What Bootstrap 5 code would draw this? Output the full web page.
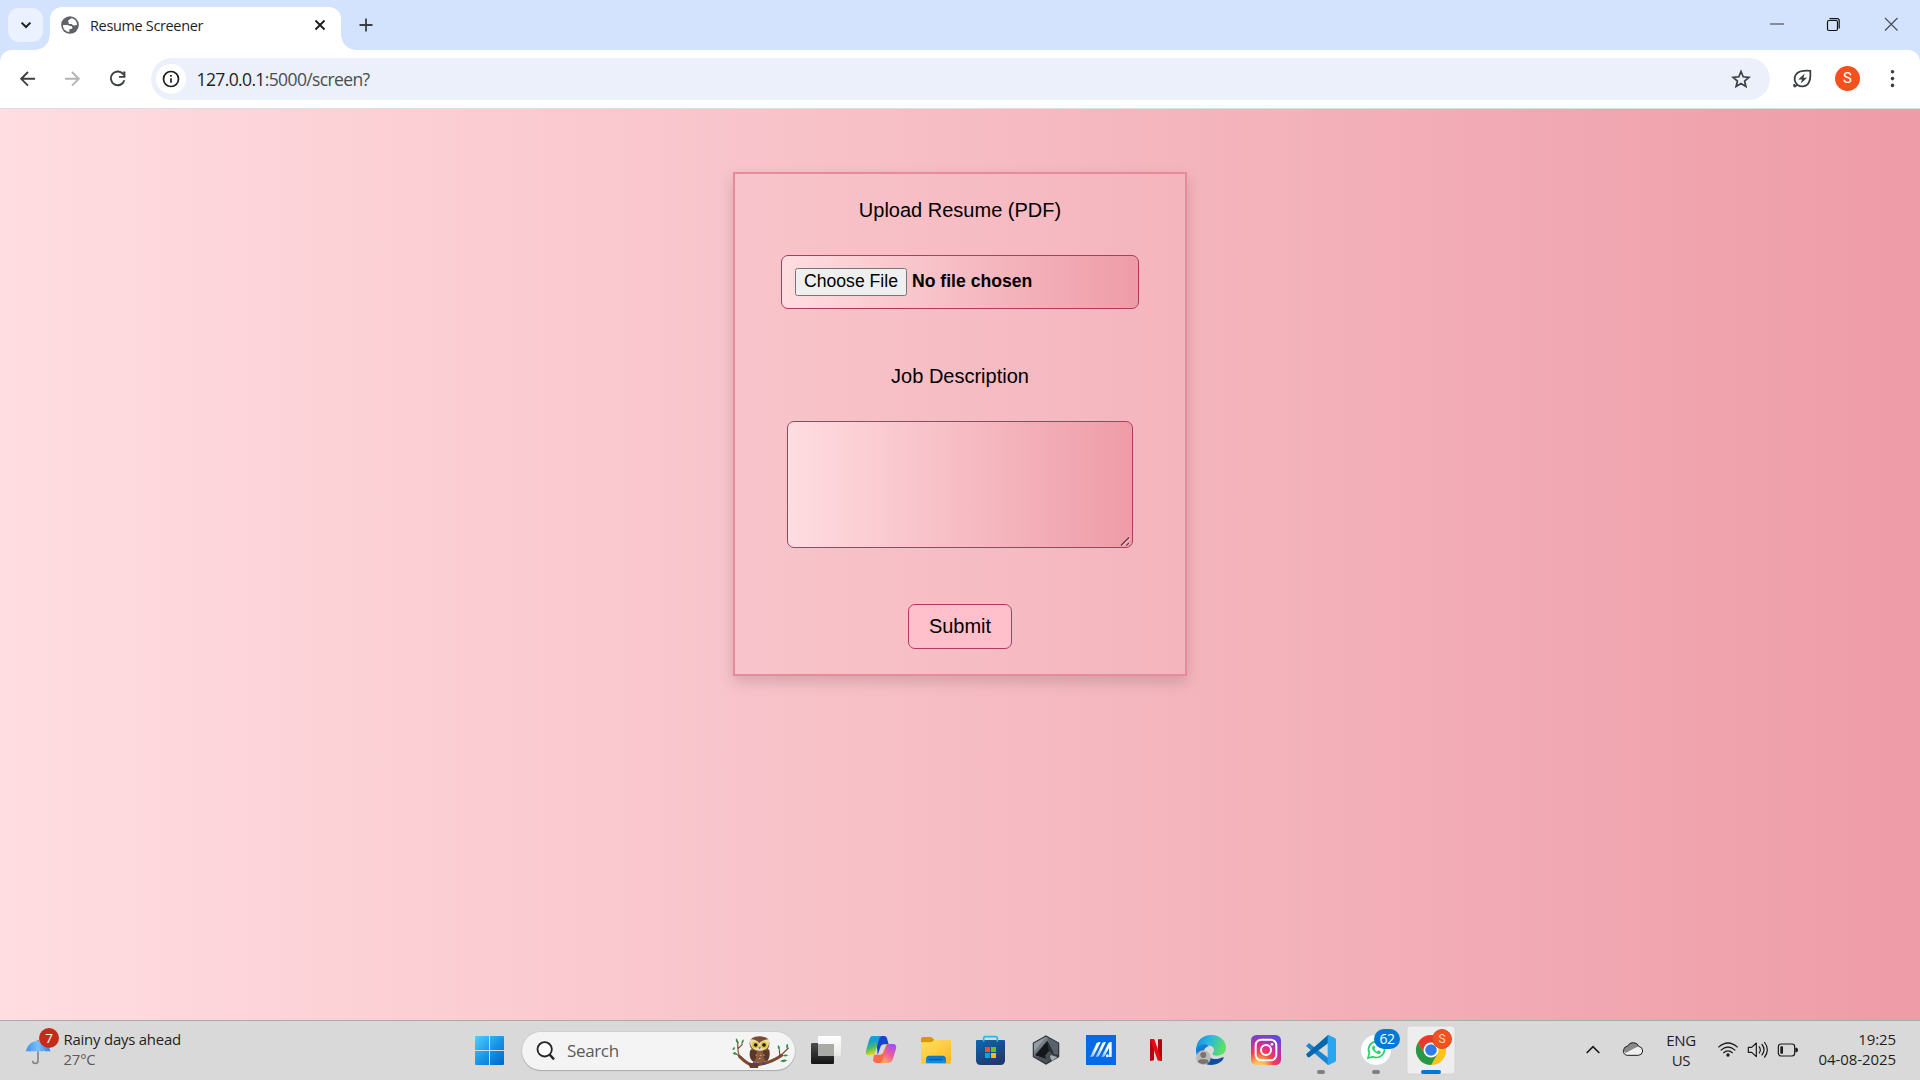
<!DOCTYPE html>
<html lang="en">
<head>
<meta charset="utf-8">
<title>Resume Screener</title>
<link href="https://cdn.jsdelivr.net/npm/bootstrap@5.3.0/dist/css/bootstrap.min.css" rel="stylesheet">
<style>
  body{width:1920px;height:1080px;font-family:"Open Sans","Noto Sans",sans-serif;color:#1f1f1f}
  svg{display:block;flex:none}
  .ln{white-space:nowrap}
  /* tab strip */
  .strip{height:50px;background:#d3e2fd;padding-left:8px}
  .tabmenu{width:35px;height:34px;margin-top:8px;border-radius:11px;background:#ebf1fe}
  .tab{width:291px;height:43px;margin:7px 0 0 7px;padding:0 15px 7px 11px;background:#fff;border-radius:12px 12px 0 0;position:relative}
  .tab::before,.tab::after{content:"";position:absolute;bottom:0;width:15px;height:15px}
  .tab::before{left:-15px;background:radial-gradient(circle at 0 0,transparent 14.5px,#fff 15px)}
  .tab::after{right:-15px;background:radial-gradient(circle at 100% 0,transparent 14.5px,#fff 15px)}
  .tabname{font-size:14.5px;letter-spacing:-.35px;line-height:20px;margin:2px 0 0 11px}
  /* toolbar */
  .barwrap{background:#d3e2fd}
  .bar{height:59px;background:#fff;border-radius:12px 12px 0 0;border-bottom:1px solid #dadfe0;padding-top:8px}
  .omni{width:1620px;height:42px;margin-left:9px;background:#ebf0fa;padding:0 19px 0 5px}
  .site{width:30px;height:30px;background:#fff}
  .addr{font-size:17.5px;letter-spacing:-.62px;margin:0 0 1px 10.500px;line-height:24px}
  .addr span{color:#4a4d51}
  .who{width:25px;height:25px;margin-left:1px;background:#f4511e;color:#fff;font:15px/25px Roboto,sans-serif}
  /* page */
  .pg{height:911px;background:linear-gradient(to right,#ffdde1,#ee9ca7);font-family:"Liberation Sans",Arial,sans-serif;color:#000;padding-top:63px}
  .upform{width:454px;height:504px;border:2px solid #e58b9b;box-shadow:0 6px 14px rgba(0,0,0,.15);padding-top:24px;font-size:20px;line-height:24px}
  .fld{background:linear-gradient(to right,#ffdde1,#ee9ca7);border:1px solid #b03a63;border-radius:7px}
  .filebox{width:358px;height:54px;margin-top:33px;padding:12px 13px;font-size:17.600px;font-weight:700}
  .pick{width:112px;height:28px;background:#efefef;border:1px solid #767676;border-radius:2.5px;color:#000;font-size:17.600px;line-height:24px;padding:0 0 2px}
  .nofile{margin:1px 0 0 5px}
  .jdwrap{position:relative;margin-top:33px}
  .jd{display:block;width:346px;height:127px;resize:none}
  .grip{position:absolute;right:2px;bottom:1px}
  .jdlabel{margin-top:55px}
  .send{width:104px;height:45px;margin-top:56px;border:1px solid #b03a63;border-radius:7px;background:#ffc0cb;font-size:20px;line-height:24px;padding:0 0 2px;color:#000}
  /* taskbar */
  .task{height:60px;border-top:1px solid #ababab;background:#d9d9d9}
  .weather{width:462px;padding-left:24px}
  .wtext{font-size:14.9px;line-height:20px;letter-spacing:-.2px;margin:-4px 0 0 4.500px}
  .wtext div+div,.lookup{color:#5a5a5a}
  .pill{width:273px;height:38px;margin:0 3px 0 5px;background:#f4f4f4;box-shadow:0 1px 1px #aaa,0 0 0 1px #cfcfcf;padding-left:14px}
  .lookup{font-size:17px;letter-spacing:-.35px;width:175px;padding-left:11px}
  .slot{width:55px;height:59px;position:relative}
  .cnt{position:absolute;left:26px;top:8px;width:26px;height:20px;background:#0078d7;color:#fff;font-size:14px;line-height:20px;letter-spacing:-.5px}
  .prof{position:absolute;left:29px;top:8px;width:20px;height:20px;background:#f4511e;border:1px solid #c9502c;color:#ffd2bf;font:12px/18px Roboto,sans-serif}
  .rain{position:absolute;left:15px;top:7px;width:20px;height:20px;background:#c42b1c;color:#fff;font-size:13.5px;line-height:20px}
  .tray{padding-right:24px;font-size:15px;line-height:20px;letter-spacing:-.3px}
  .lang{width:50px;margin:-2px 9px 0 3px}
  .clock{width:89px;margin-top:-4px;letter-spacing:-.08px}
</style>
<script src="https://cdn.jsdelivr.net/npm/bootstrap@5.3.0/dist/js/bootstrap.bundle.min.js"></script>
</head>
<body class="overflow-hidden d-flex flex-column">

<header>
  <div class="strip d-flex">
    <div class="tabmenu d-flex align-items-center justify-content-center">
      <svg width="12" height="10" viewBox="0 0 12 10"><path d="M1.6 2.6 6 7l4.400-4.400" fill="none" stroke="#1f1f1f" stroke-width="2"/></svg>
    </div>
    <div class="tab d-flex align-items-center">
      <svg width="18" height="18" viewBox="0 0 54 54"><circle cx="27" cy="27" r="26.500" fill="#5f6368"/><path d="M6 27h13c4 0 5 3 9 3 4 0 6 2 6 5s-3 4-6 4c-4 0-3 3-3 9C13 47 5 38 6 27M32 7c-3 1-5 4-8 5-3 1-4 4-1 6 2 2-3 4 1 6 4 1 7-2 9 1 2 4 6 4 9 3 3-1 5-1 6-1 0-11-6-18-16-20" fill="#fff"/></svg>
      <span class="tabname ln">Resume Screener</span>
      <svg class="ms-auto" width="12" height="12" viewBox="0 0 12 12"><path d="m1.500 1.500 9 9m0-9-9 9" stroke="#1f1f1f" stroke-width="1.900"/></svg>
    </div>
    <svg width="50" height="50" viewBox="0 0 50 50"><path d="M25 18.500v13M18.500 25h13" stroke="#3c4043" stroke-width="1.800"/></svg>
    <div class="ms-auto d-flex">
      <svg width="57" height="50" viewBox="0 0 57 50"><path d="M21 24h14" stroke="#555b66" stroke-width="1.300"/></svg>
      <svg width="57" height="50" viewBox="0 0 57 50"><rect x="21.500" y="20.500" width="10" height="10" rx="1.500" fill="none" stroke="#111" stroke-width="1.200"/><path d="M23.500 18.600h7.700q2 0 2 2v7.900" fill="none" stroke="#111" stroke-width="1.200"/></svg>
      <svg width="57" height="50" viewBox="0 0 57 50"><path d="m22 18 12.500 12.500m0-12.500L22 30.500" stroke="#4a4f59" stroke-width="1.200"/></svg>
    </div>
  </div>
  <div class="barwrap">
  <div class="bar d-flex align-items-start">
    <svg width="142" height="42" viewBox="0 58 142 42"><g fill="none" stroke-width="1.900"><path d="M35 78.800H21.500M28 72l-6.800 6.800 6.800 6.800" stroke="#3c4043"/><path d="M65 78.800h13.500M72 72l6.800 6.800-6.800 6.800" stroke="#b2b4b6"/><path d="M123.500 74.500a6.900 6.900 0 1 0 .9 5.800" stroke="#3c4043"/></g><path d="M125.400 71.500v6.300H119v-1.800h4.200v-4.500Z" fill="#3c4043"/></svg>
    <div class="omni rounded-pill d-flex align-items-center">
      <div class="site rounded-circle d-flex align-items-center justify-content-center">
        <svg width="18" height="18" viewBox="0 0 18 18"><circle cx="9" cy="9" r="7.500" fill="none" stroke="#1f1f1f" stroke-width="1.700"/><path d="M9 8.200v4.600M9 5v1.800" stroke="#1f1f1f" stroke-width="1.700"/></svg>
      </div>
      <div class="addr ln">127.0.0.1<span>:5000/screen?</span></div>
      <svg class="ms-auto" width="20" height="20" viewBox="0 0 20 20"><path d="m10 2.500 2.200 5.300 5.700.5-4.300 3.700 1.300 5.500-4.900-2.900-4.900 2.900 1.300-5.500L2.100 8.300l5.700-.5Z" fill="none" stroke="#3c4043" stroke-width="1.700"/></svg>
    </div>
    <svg width="64" height="42" viewBox="1770 58 64 42"><g fill="none" stroke="#3c4043" stroke-width="1.800"><path d="M1810.300 70.800c-7-.4-12 .4-14.400 3.700-2.400 3.500-1.400 8 1.700 10.400 3.300 2.400 7.800 2 10.400-1 2.500-3 2.700-7.500 2.300-13.100ZM1797.300 84.500l-3 2.600M1794.200 84v2.800"/></g><path d="m1804.700 73.600-6.500 6h3.800l-1.200 4 6.300-5.800h-3.700Z" fill="#3c4043"/></svg>
    <div class="who rounded-circle text-center mt-2">S</div>
    <svg width="60" height="42" viewBox="1860 58 60 42"><g fill="#3c4043"><circle cx="1892.500" cy="71.800" r="1.800"/><circle cx="1892.500" cy="78.600" r="1.800"/><circle cx="1892.500" cy="85.400" r="1.800"/></g></svg>
  </div>
  </div>
</header>

<main class="pg">
  <form class="upform mx-auto d-flex flex-column align-items-center">
    <label class="ln">Upload Resume (PDF)</label>
    <div class="fld filebox d-flex align-items-start">
      <button type="button" class="pick">Choose File</button><span class="nofile ln">No file chosen</span>
    </div>
    <label class="jdlabel ln">Job Description</label>
    <div class="jdwrap">
      <textarea class="fld jd"></textarea>
      <svg class="grip" width="11" height="11" viewBox="0 0 11 11"><g stroke="#fff" stroke-opacity=".7" stroke-width="1"><path d="M2.500 10 10 2.500M7 10l3-3"/></g><g stroke="#5b3a44" stroke-width="1.200"><path d="M1 9.500 9 1.500M6.500 9.500 9 7"/></g></svg>
    </div>
    <button type="button" class="send">Submit</button>
  </form>
</main>

<footer class="task d-flex align-items-center">
  <div class="weather d-flex align-items-center">
    <div class="position-relative">
      <svg width="35" height="59" viewBox="72 33 105 177"><defs><linearGradient id="um"><stop stop-color="#3b93ee"/><stop offset=".5" stop-color="#7cc0fb"/><stop offset="1" stop-color="#2d7fe0"/></linearGradient></defs><path d="M114 90v62q0 8-8 8t-8-8" fill="none" stroke="#858585" stroke-width="5"/><path d="M78 125c3-20 18-32 36-32s34 12 37 32q-7-4-13 0-6-5-12 0-6-4-12 0-6-4-12 0-6-4-12 0-6-4-12 0" fill="url(#um)"/></svg>
      <span class="rain rounded-circle text-center">7</span>
    </div>
    <div class="wtext ln"><div>Rainy days ahead</div><div>27°C</div></div>
  </div>

  <svg width="55" height="59" viewBox="6 33 165 177"><defs><linearGradient id="win" x1="45" y1="78" x2="132" y2="165" gradientUnits="userSpaceOnUse"><stop stop-color="#4fd0ff"/><stop offset=".55" stop-color="#1791e3"/><stop offset="1" stop-color="#0067c9"/></linearGradient></defs><path d="M48 78h39v42H45V81q0-3 3-3m42 0h39q3 0 3 3v39H90ZM45 123h42v42H48q-3 0-3-3Zm45 0h42v39q0 3-3 3H90Z" fill="url(#win)"/></svg>

  <div class="pill rounded-pill d-flex align-items-center">
    <svg width="20" height="20" viewBox="226 90 60 60"><circle cx="252" cy="115" r="21.500" fill="#fff" stroke="#252525" stroke-width="5.500"/><path d="m267 131 13 14" stroke="#252525" stroke-width="7"/></svg>
    <div class="lookup ln">Search</div>
    <svg width="60" height="38" viewBox="810 63 180 114"><g fill="none" stroke="#7d4a2f" stroke-linecap="round"><path d="M836 137q25 25 42 26 50-5 84-30" stroke-width="9"/><path d="M836 138q-8-20-5-45M836 137l-15-12M832 112l12-12M950 143l32-32M957 139l-2-22" stroke-width="3.500"/></g><path d="M862 156h32l-3 15h-24Z" fill="#6b3d27"/><path d="M867 120q-8 35 28 36 37-2 30-38l-8-10h-42Z" fill="#8a5a3d"/><path d="M868 118q-4 26 10 34 12-14 8-34ZM924 118q4 26-8 34-12-14-10-34Z" fill="#5b3727"/><path d="M866 98q-2-21 30-22 31 1 29 22 1 22-29 23-31-1-30-23" fill="#7a4b34"/><path d="M867 85q16-2 28 11 14-12 29-11 5 32-29 35-32-3-28-35" fill="#f0d7a8"/><circle cx="883" cy="102" r="10" fill="#d6c52d"/><circle cx="909" cy="102" r="10" fill="#d6c52d"/><circle cx="884" cy="102" r="5.500" fill="#171820"/><circle cx="909" cy="102" r="5.500" fill="#171820"/><path d="m892 107 4 9 4-9Z" fill="#6a6f78"/><path d="M884 132h5m7 1h6m4-1h5m-18 11h6" stroke="#d8a77d" stroke-width="3"/><path d="M876 157h12m14 0h12" stroke="#403f99" stroke-width="8" stroke-dasharray="3 1"/><g fill="#37914d"><path d="M831 98q-9-4-6-16 9 5 6 16M841 100q-1-12 7-15 2 11-7 15M829 130q-12 4-14-4 10-4 14 4M815 118q-2-8 6-10 3 8-6 10M978 113q-6-8 1-15 6 8-1 15M982 112q4 2 1 3M955 118q-8-8-3-16 8 7 3 16M957 151q10-9 22-3-8 9-22 3M965 134q8-7 17-1-8 6-17 1"/></g></svg>
  </div>

  <!-- task view -->
  <svg width="55" height="59" viewBox="-6 33 165 177"><defs><linearGradient id="tv" x2="0" y2="1"><stop stop-color="#4b4b4b"/><stop offset="1" stop-color="#151515"/></linearGradient><linearGradient id="tw" x2="0" y2="1"><stop stop-color="#fff"/><stop offset="1" stop-color="#e9e9e9"/></linearGradient></defs><rect x="33" y="99" width="69" height="63" rx="4" fill="url(#tv)"/><rect x="54" y="78" width="69" height="60" rx="4" fill="url(#tw)"/><path d="M54 102h45q3 0 3 3v33H58q-4 0-4-4Z" fill="#a9a9a6"/></svg>
  <!-- copilot -->
  <svg width="55" height="59" viewBox="159 33 165 177"><defs><linearGradient id="c1" x2=".3" y2="1"><stop stop-color="#16a3f4"/><stop offset=".35" stop-color="#189ecb"/><stop offset=".65" stop-color="#45bd66"/><stop offset="1" stop-color="#f0d716"/></linearGradient><linearGradient id="c2" x1=".7" x2=".2" y2="1"><stop stop-color="#a34ff0"/><stop offset=".5" stop-color="#ed5b9c"/><stop offset="1" stop-color="#ffb05c"/></linearGradient></defs><path d="M228 78h25q6 0 8 7l5 18h-14q-8 0-11 9l-8 24Z" fill="#1545cf"/><path d="M222 134h18q8 0 10-8l10-24h11l-16 48q-3 9-12 9h-15q-7 0-9-8Z" fill="#fb6b47"/><path d="M217 78h29q-7 2-10 13l-10 36q-2 9-10 9h-9q-12 0-9-14l9-31q3-13 10-13" fill="url(#c1)"/><path d="M269 102h10q12 0 9 14l-9 30q-4 13-14 13h-25q7-2 10-13l9-35q2-9 10-9" fill="url(#c2)"/></svg>
  <!-- file explorer -->
  <svg width="55" height="59" viewBox="324 33 165 177"><defs><linearGradient id="fo" x2=".8" y2="1"><stop stop-color="#ffe06a"/><stop offset="1" stop-color="#fdbb1e"/></linearGradient><linearGradient id="fb" x2="0" y2="1"><stop stop-color="#0c74c9"/><stop offset="1" stop-color="#1a8fdd"/></linearGradient></defs><path d="M363 86q0-5 5-5h23q4 0 7 4l5 5-5 8h-35Z" fill="#dc9708"/><path d="M363 97h28q4 0 8-4l4-3h47q3 0 3 4v65q0 2-3 2h-84q-3 0-3-3Z" fill="url(#fo)"/><path d="M378 160v-12q0-11 10-11h40q10 0 10 11v12Z" fill="url(#fb)"/><path d="M388 149h38" stroke="#0b4f8e" stroke-width="3" stroke-linecap="round"/></svg>
  <!-- store -->
  <svg width="55" height="59" viewBox="489 33 165 177"><defs><linearGradient id="st" x2=".5" y2="1"><stop stop-color="#0b68b2"/><stop offset="1" stop-color="#20396c"/></linearGradient></defs><path d="M528 93q0-3 3-3h81q3 0 3 3v58q0 14-14 14h-59q-14 0-14-14Z" fill="url(#st)"/><path d="M551 95V85q0-5 5-5h31q5 0 5 5v10" fill="none" stroke="#24b9ef" stroke-width="5"/><path d="M555 111h15v15h-15Z" fill="#f25022"/><path d="M573 111h15v15h-15Z" fill="#7fba00"/><path d="M555 129h15v15h-15Z" fill="#00a4ef"/><path d="M573 129h15v15h-15Z" fill="#ffb900"/></svg>
  <!-- armoury hexagon -->
  <svg width="55" height="59" viewBox="654 33 165 177"><defs><linearGradient id="hx" x2=".9" y2="1"><stop stop-color="#aab2ba"/><stop offset=".5" stop-color="#5a626b"/><stop offset="1" stop-color="#20252b"/></linearGradient></defs><path d="m738 78 38 21v41l-38 22-38-22V99Z" fill="url(#hx)" stroke="#2f353b" stroke-width="3.500"/><path d="m741 82 33 18v34l-12-2Z" fill="#59616a"/><path d="m736 82-34 19v24Z" fill="#959da5"/><path d="m742 92-37 44 34 10-4-9 12-14 15 10Z" fill="#14171b"/><path d="m741 93 21 40-15-10Z" fill="#2b3036"/><path d="m702 138 37 9 23-7-24 20Z" fill="#4b525a"/><path d="m752 135 20 6-16 12-6-12Z" fill="#a7adb3"/></svg>
  <!-- myasus -->
  <svg width="55" height="59" viewBox="819 33 165 177"><defs><linearGradient id="as" x1="0" x2="1" y1="1" y2="0"><stop stop-color="#7fb2f7"/><stop offset=".6" stop-color="#fff"/></linearGradient></defs><path d="M858 75h90v90h-90Z" fill="#0669e6"/><path d="m870 141 20-41q2-4 12-4l-21 42q-2 3-11 3" fill="url(#as)"/><path d="m887 141 20-41q2-4 11-4l-21 42q-2 3-10 3" fill="url(#as)"/><path d="m904 141 21-41q2-4 10-4v45h-8v-27l-13 24q-2 3-10 3" fill="url(#as)"/><circle cx="922" cy="137" r="4.500" fill="#fff"/></svg>
  <!-- netflix -->
  <svg width="55" height="59" viewBox="-6 33 165 177"><path d="M60 88h12v63l-12 2ZM84 88h12v65l-12-2Z" fill="#b1060f"/><path d="M60 88h13l23 65-13-2Z" fill="#e50914"/></svg>
  <!-- edge -->
  <svg width="55" height="59" viewBox="159 33 165 177"><defs><linearGradient id="e1" x2="1" y2=".3"><stop stop-color="#1688d8"/><stop offset=".5" stop-color="#2ab9df"/><stop offset="1" stop-color="#5cdf64"/></linearGradient><linearGradient id="e2" x2=".4" y2="1"><stop stop-color="#168fe0"/><stop offset="1" stop-color="#0d4fa4"/></linearGradient></defs><path d="M198 118c2-27 20-43 46-43 27 0 44 19 44 37 0 17-13 25-26 25-12 0-17-4-13-9 10-12-4-24-20-22-16 1-26 6-31 12" fill="url(#e1)"/><path d="M198 117c6-14 26-19 39-9-12 3-18 13-16 27 2 16 13 27 28 30-30 2-53-20-51-48" fill="url(#e2)"/><path d="M229 122c0 19 18 29 37 24 8-2 12-6 15-4 3 1-8 23-37 23-16-3-27-25-15-43" fill="#0c4f9d"/><circle cx="220" cy="143" r="22" fill="#bcbab7"/><circle cx="220" cy="135" r="9" fill="#777470"/><path d="M204 157q0-9 10-9h12q10 0 10 9-16 10-32 0" fill="#777470"/></svg>
  <!-- instagram -->
  <svg width="55" height="59" viewBox="324 33 165 177"><defs><radialGradient id="ig" cx=".27" cy="1.070" r="1.100"><stop stop-color="#ffdc68"/><stop offset=".2" stop-color="#feb64d"/><stop offset=".45" stop-color="#f6404f"/><stop offset=".7" stop-color="#c92d9d"/><stop offset="1" stop-color="#6549d5"/></radialGradient></defs><rect x="363" y="75" width="90" height="90" rx="16" fill="url(#ig)"/><rect x="377" y="89" width="62" height="62" rx="17" fill="none" stroke="#fff" stroke-width="6"/><circle cx="408" cy="120" r="15" fill="none" stroke="#fff" stroke-width="6"/><circle cx="426" cy="103" r="4" fill="#fff"/></svg>
  <!-- vs code -->
  <svg width="55" height="59" viewBox="489 33 165 177"><path d="m528 108 9-9 61 47v19h-4Z" fill="#1c85cf"/><path d="m528 133 66-58h4v22l-60 45q-3 1-5-1Z" fill="#0568ab"/><path d="m595 75 20 9q3 2 3 5v62q0 3-3 5l-20 9q-3 0-2-3V78q0-3 2-3" fill="#2aa5ef"/><rect x="561" y="180" width="24" height="12" rx="6" fill="#808080"/></svg>
  <!-- whatsapp -->
  <div class="slot">
    <svg width="55" height="59" viewBox="654 33 165 177"><circle cx="738" cy="120" r="45" fill="#fff"/><path d="m714 144 4-15a24 24 0 1 1 11 11Z" fill="none" stroke="#25d366" stroke-width="5"/><path d="M730 107q-9 6 3 18 13 12 20 3 0-5-8-7l-4 4q-6-3-8-9l3-3q-2-7-6-6" fill="#25d366"/><rect x="726" y="180" width="24" height="12" rx="6" fill="#808080"/></svg>
    <span class="cnt rounded-pill text-center">62</span>
  </div>
  <!-- chrome -->
  <div class="slot">
    <svg width="55" height="59" viewBox="819 33 165 177"><rect x="831" y="48" width="144" height="144" rx="10" fill="#eeeeee" stroke="#cfcfcf" stroke-width="2"/><circle cx="903" cy="120" r="45" fill="#fbc116"/><path d="M903 97.500h39A45 45 0 0 1 903 165l19.500-33.700Z" fill="#fcc31c"/><path d="M864 97.500A45 45 0 0 0 903 165l19.500-33.700-39 0Z" fill="#279847"/><path d="m864 97.500 19.500 33.800L903 98v-.5l39 0A45 45 0 0 0 864 97.500" fill="#e33b2e"/><circle cx="903" cy="120" r="22.500" fill="#fff"/><circle cx="903" cy="120" r="17.500" fill="#2f7bea"/><rect x="873" y="180" width="60" height="12" rx="6" fill="#0078d7"/></svg>
    <span class="prof rounded-circle text-center">S</span>
  </div>

  <div class="tray ms-auto d-flex align-items-center">
    <svg width="93" height="59" viewBox="0 33 279 177"><path d="m80 129 19-19 19 19" fill="none" stroke="#1a1a1a" stroke-width="5"/><path d="M203 136q-13-1-13-14 1-12 13-14 5-11 17-10 12 0 16 11 12 2 12 14-1 12-13 13Z" fill="#efefef"/><path d="M191 124q0-14 12-16 5-11 17-10 12 0 16 11l-17 8-22 12Z" fill="#898989"/><path d="M203 136q-13-1-13-14 1-12 13-14 5-11 17-10 12 0 16 11 12 2 12 14-1 12-13 13Z" fill="none" stroke="#1c1c1c" stroke-width="3"/></svg>
    <div class="lang text-center ln"><div>ENG</div><div>US</div></div>
    <svg width="92" height="59" viewBox="465 33 276 177"><g fill="none" stroke="#1b1b1b" stroke-width="3.600"><path d="M475 112q29-26 58 0M482 121q22-20 44 0M490 129q14-13 28 0"/><path d="M565 112v15h10l14 13V99l-14 13Z" stroke-linejoin="round"/><path d="M597 109q8 11 0 21M605 102q14 17 0 34M613 96q18 23 0 47"/><rect x="655" y="102" width="49" height="36" rx="8"/></g><circle cx="504" cy="135" r="5" fill="#1b1b1b"/><rect x="661" y="109" width="8" height="22" rx="2" fill="#1b1b1b"/><path d="M706 113h4q4 1 4 7t-4 7h-4Z" fill="#1b1b1b"/></svg>
    <div class="clock text-end ln"><div>19:25</div><div>04-08-2025</div></div>
  </div>
</footer>
</body>
</html>
